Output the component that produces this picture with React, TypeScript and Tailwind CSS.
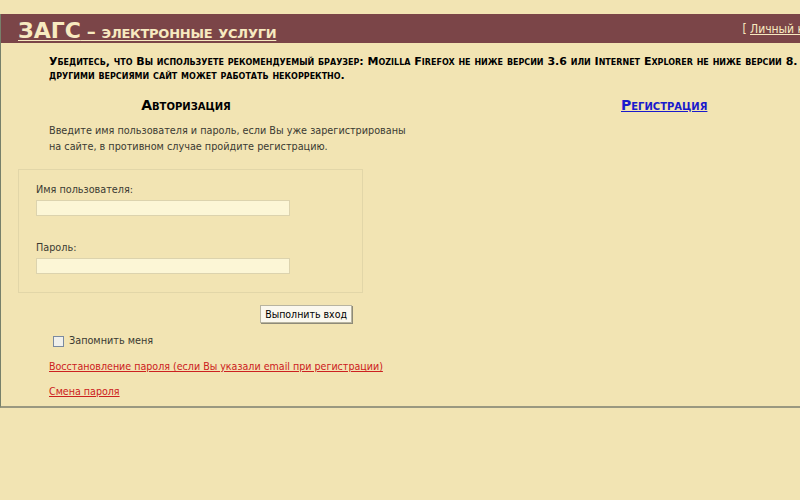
import React from 'react';

const font = { fontFamily: 'Verdana, "DejaVu Sans", sans-serif' };
const body = { fontFamily: 'Tahoma, "DejaVu Sans Condensed", "Liberation Sans", sans-serif' };

const App: React.FC = () => {
  return (
    <div className="w-[800px] h-[500px] overflow-hidden bg-[#f2e4b3]" style={font}>
      <div className="w-[900px] pt-[14px]">
        <div className="border-l border-b-2 border-l-[#77806a] border-b-[#9a9880] h-[394px]">
          {/* шапка */}
          <div className="h-[29px] bg-[#7b4548] flex items-end justify-between pl-[17px] pr-[48px]">
            <a className="text-[#f7eac0] font-bold underline decoration-[#f7eac0] underline-offset-[2px] leading-none pb-[1px] [font-variant:small-caps] whitespace-nowrap">
              <span className="text-[22px]">ЗАГС</span>
              <span className="text-[18px] tracking-[-0.25px]"> – электронные услуги</span>
            </a>
            <div className="text-[12px] text-[#f7eac0] self-center whitespace-nowrap" style={body}>
              [ <a className="underline">Личный кабинет</a> ]
            </div>
          </div>

          {/* предупреждение */}
          <p className="pl-[48px] pt-[12px] text-[11px] leading-[14px] font-bold text-black [font-variant:small-caps] whitespace-nowrap">
            Убедитесь, что Вы используете рекомендуемый браузер: Mozilla Firefox не ниже версии 3.6 или Internet Explorer не ниже версии 8. С
            <br />
            другими версиями сайт может работать некорректно.
          </p>

          <div className="flex pt-[14px]">
            {/* авторизация */}
            <div className="w-[370px]">
              <h2 className="text-center text-[14px] font-bold text-black [font-variant:small-caps] leading-[16px]">Авторизация</h2>
              <p className="pl-[48px] pt-[10px] text-[10.75px] leading-[16px] text-[#3a3a32] whitespace-nowrap" style={body}>
                Введите имя пользователя и пароль, если Вы уже зарегистрированы
                <br />
                на сайте, в противном случае пройдите регистрацию.
              </p>
              <div className="ml-[17px] mt-[14px] w-[345px] h-[124px] border border-[#e2d6a8] pl-[17px] pt-[12px] text-[10.75px] text-[#3a3a32]" style={body}>
                <div className="leading-[16px]">Имя пользователя:</div>
                <input className="block mt-[2px] w-[254px] h-[16px] bg-[#fcf6d6] border border-[#dcd3ae] outline-none" />
                <div className="leading-[16px] mt-[24px]">Пароль:</div>
                <input type="password" className="block mt-[2px] w-[254px] h-[16px] bg-[#fcf6d6] border border-[#dcd3ae] outline-none" />
              </div>
              <div className="flex justify-end pr-[19px] pt-[12px]">
                <button className="h-[18px] px-[4px] text-[10.5px] text-black bg-[#fbf8ee] border border-[#b8b4a0] shadow-[1px_1px_0_#8e8a78] leading-none" style={body}>
                  Выполнить вход
                </button>
              </div>
              <label className="flex items-center pl-[52px] pt-[10px] text-[10.75px] leading-[16px] text-[#3a3a32]" style={body}>
                <span className="w-[11px] h-[11px] border border-[#7a8aa0] bg-[#f0f0ec] mr-[5px]" />
                Запомнить меня
              </label>
              <a className="block pl-[48px] pt-[10px] text-[10.6px] text-[#cc2020] underline whitespace-nowrap leading-[14px]" style={body}>
                Восстановление пароля (если Вы указали email при регистрации)
              </a>
              <a className="block pl-[48px] pt-[11px] text-[10.6px] text-[#cc2020] underline leading-[14px]" style={body}>
                Смена пароля
              </a>
            </div>

            {/* регистрация */}
            <div className="pl-[250px]">
              <a className="block text-[14px] font-bold text-[#1a1acc] underline [font-variant:small-caps] leading-[16px]">Регистрация</a>
            </div>
          </div>
        </div>
      </div>
    </div>
  );
};

export default App;
